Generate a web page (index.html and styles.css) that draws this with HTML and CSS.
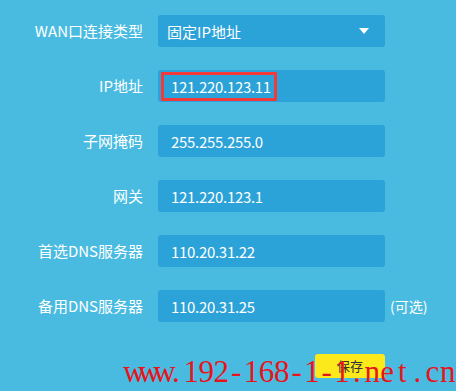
FILE: index.html
```html
<!DOCTYPE html>
<html lang="zh-CN">
<head>
    <meta charset="UTF-8">
    <meta name="viewport" content="width=device-width, initial-scale=1.0">
    <title>WAN口设置</title>
    <link rel="stylesheet" href="styles.css">
</head>
<body>
    <div class="panel">
        <div class="form">
            <div class="row">
                <div class="label">WAN口连接类型</div>
                <div class="field select">
                    <span>固定IP地址</span>
                    <span class="arrow"></span>
                </div>
            </div>
            <div class="row">
                <div class="label">IP地址</div>
                <div class="field highlight-field">
                    <span class="highlight">121.220.123.11</span>
                </div>
            </div>
            <div class="row">
                <div class="label">子网掩码</div>
                <div class="field">255.255.255.0</div>
            </div>
            <div class="row">
                <div class="label">网关</div>
                <div class="field">121.220.123.1</div>
            </div>
            <div class="row">
                <div class="label">首选DNS服务器</div>
                <div class="field">110.20.31.22</div>
            </div>
            <div class="row">
                <div class="label">备用DNS服务器</div>
                <div class="field">110.20.31.25</div>
                <div class="hint">(可选)</div>
            </div>
        </div>
        <div class="actions">
            <button class="save-btn">保存</button>
        </div>

        <!-- site watermark over the bottom -->
        <div class="watermark"><span>w</span><span>w</span><span>w</span><span>.</span><span>1</span><span>9</span><span>2</span><span>-</span><span>1</span><span>6</span><span>8</span><span>-</span><span>1</span><span>-</span><span>1</span><span>.</span><span>n</span><span>e</span><span>t</span><span>.</span><span>c</span><span>n</span></div>
    </div>
</body>
</html>
```

FILE: styles.css
```css
html, body {
    margin: 0;
    padding: 0;
    background: #4abbe0;
}
body {
    font-family: "Noto Sans CJK SC", "Noto Sans", sans-serif;
    color: #fff;
    width: 456px;
    height: 391px;
    overflow: hidden;
}
.panel {
    position: relative;
    height: 391px;
}
.form {
    display: flex;
    flex-direction: column;
    gap: 23px;
    padding-top: 15px;
}
.row {
    display: flex;
    align-items: center;
    height: 32px;
}
.label {
    width: 143px;
    margin-right: 15px;
    text-align: right;
    font-size: 15px;
    line-height: 32px;
}
.field {
    width: 227px;
    height: 32px;
    box-sizing: border-box;
    background: #2ba3d8;
    border-radius: 3px;
    padding-left: 13px;
    display: flex;
    align-items: center;
    font-size: 15px;
    letter-spacing: -0.3px;
}
.select {
    padding-left: 9px;
    padding-right: 16px;
    justify-content: space-between;
    letter-spacing: 0;
}
.arrow {
    width: 0;
    height: 0;
    border-left: 5px solid transparent;
    border-right: 5px solid transparent;
    border-top: 6px solid #fff;
}
.highlight-field {
    padding-left: 3px;
}
.highlight {
    box-sizing: border-box;
    width: 116px;
    height: 29px;
    border: 3px solid #f23a3a;
    padding-left: 7px;
    display: flex;
    align-items: center;
}
.hint {
    margin-left: 5px;
    font-size: 14px;
}
.actions {
    margin-top: 30px;
    padding-left: 315px;
}
.save-btn {
    width: 70px;
    height: 24px;
    border: none;
    border-radius: 3px;
    background: #fce91c;
    color: #333;
    font-family: "Noto Sans CJK SC", sans-serif;
    font-size: 13px;
    padding: 0;
}
.watermark {
    position: absolute;
    left: 123px;
    top: 354px;
    display: flex;
    font-family: "Liberation Serif", serif;
    font-size: 31px;
    line-height: 36px;
    color: #e8141c;
}
.watermark span {
    width: 15.1px;
    text-align: center;
}
```
